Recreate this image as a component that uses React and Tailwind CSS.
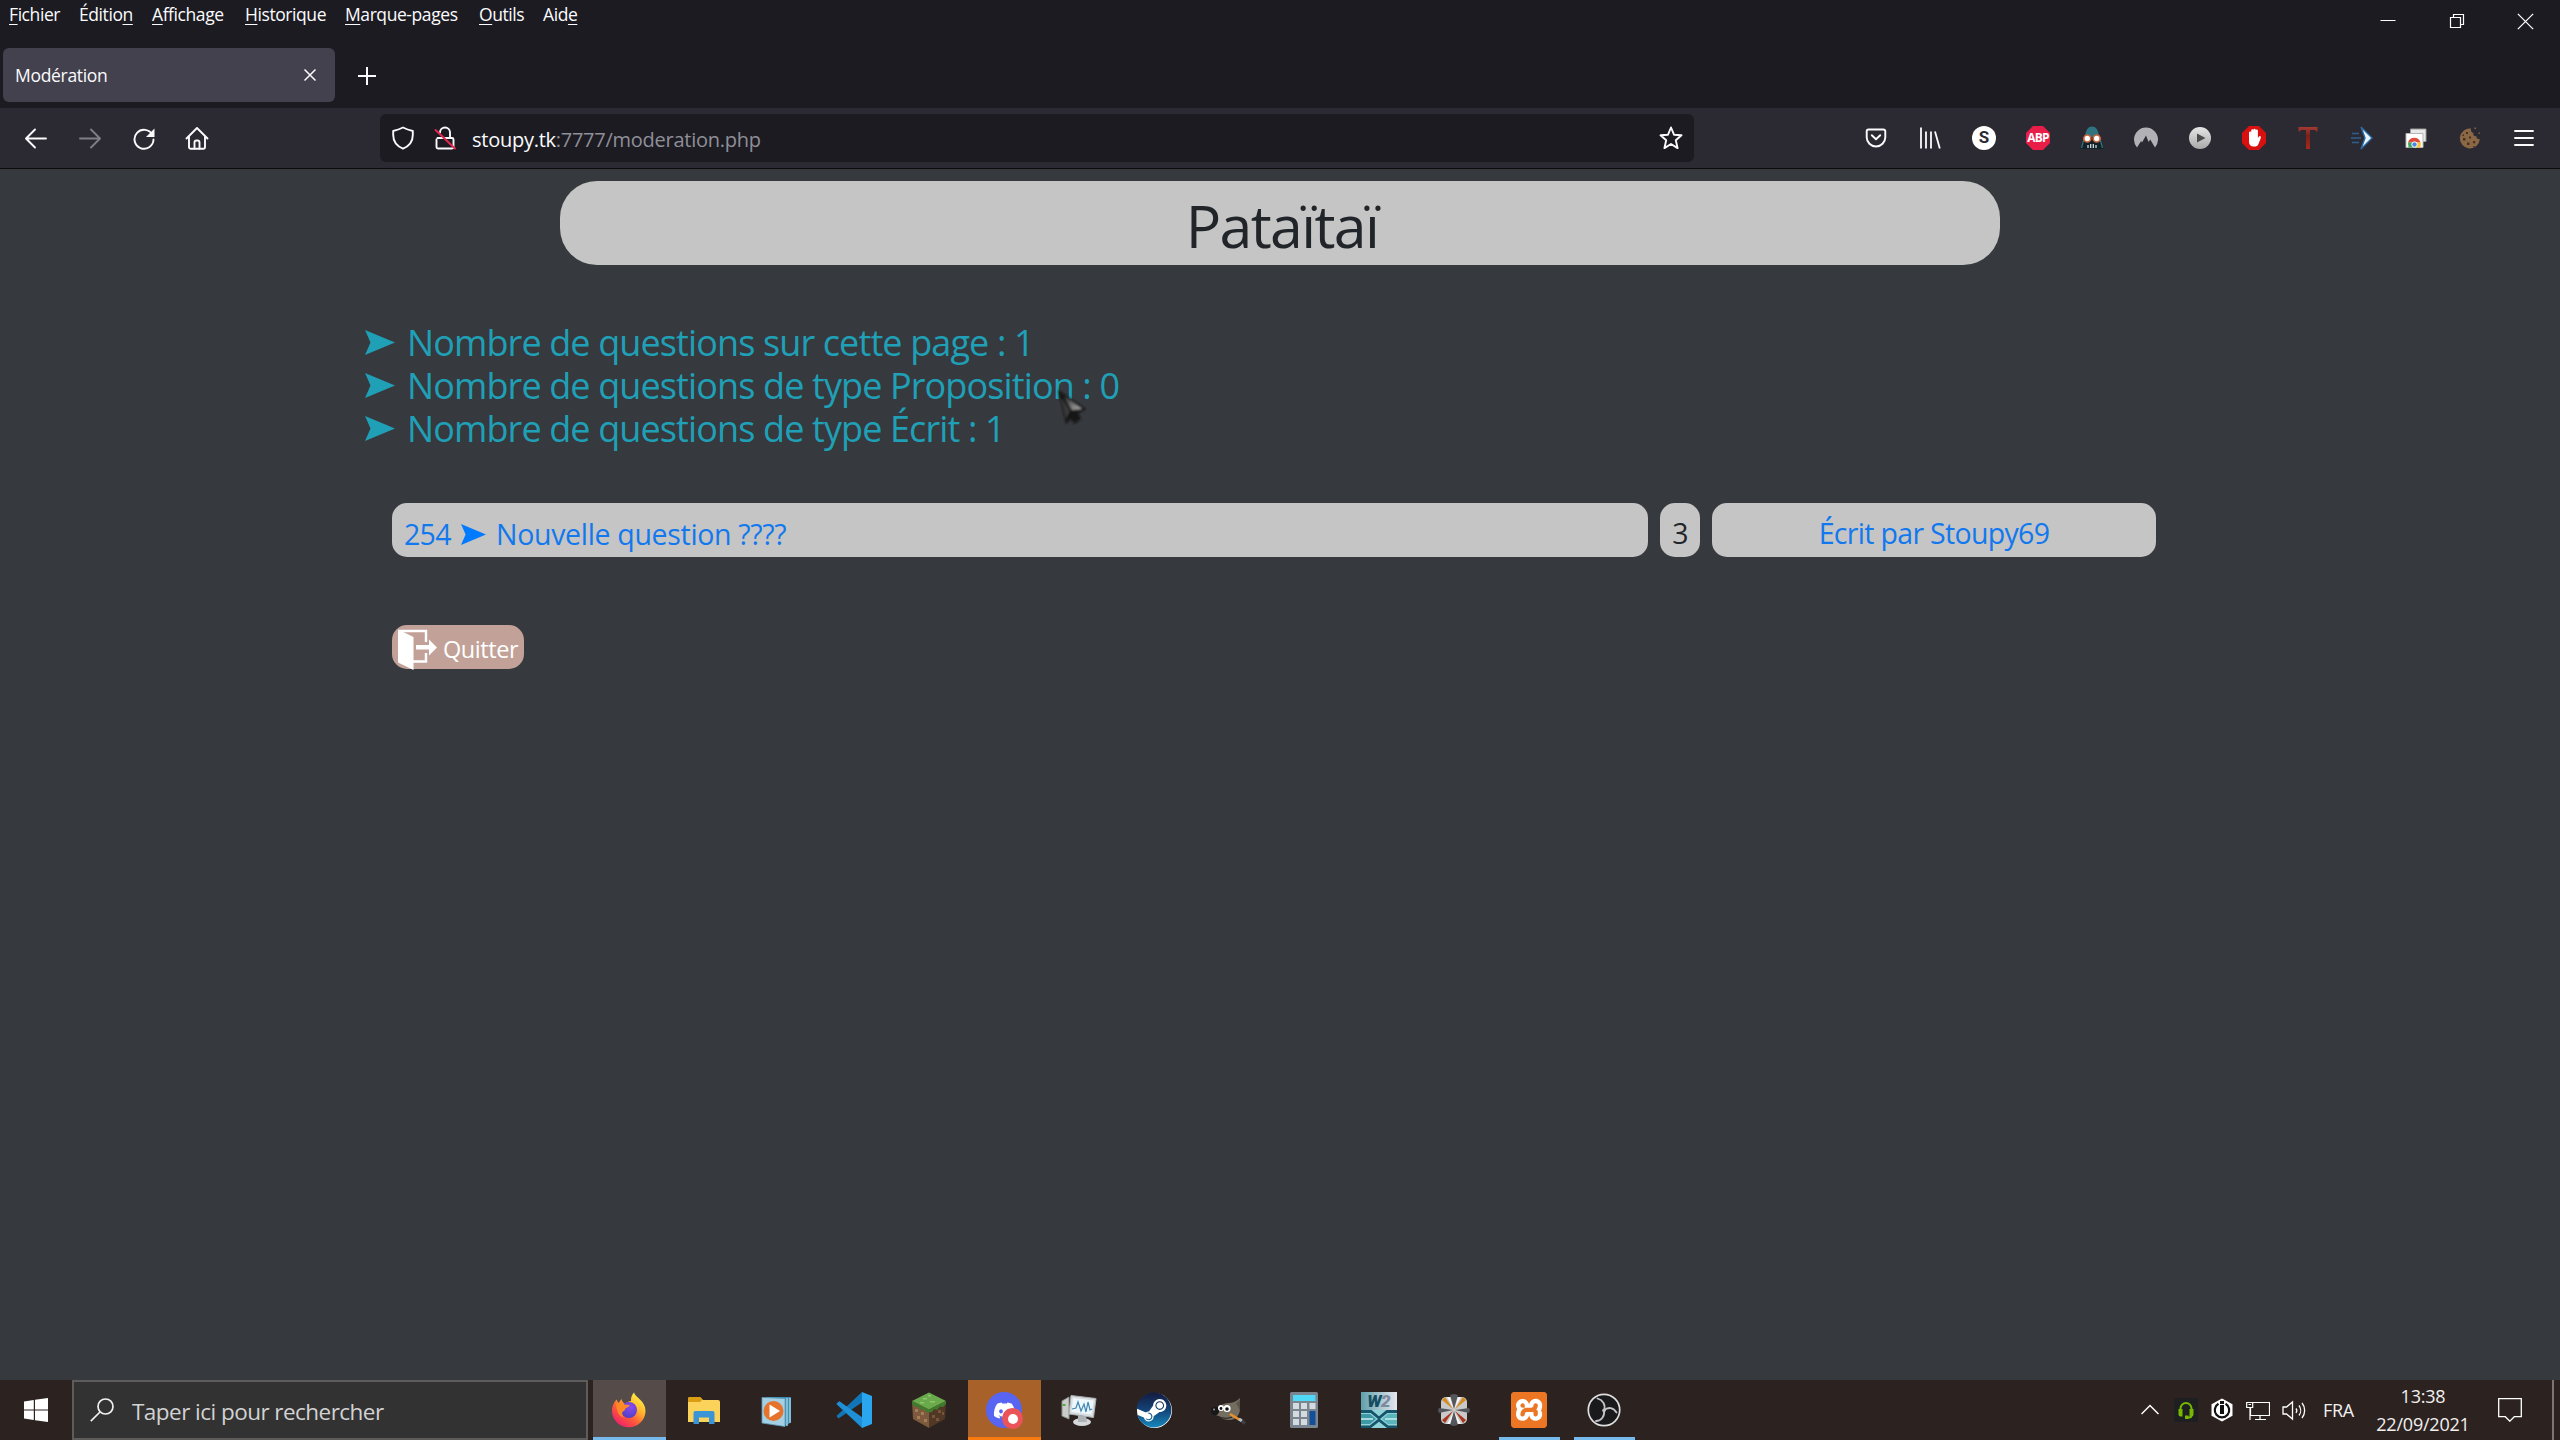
import React from "react";
import { FaSteam, FaDiscord } from "react-icons/fa";
import { SiXampp } from "react-icons/si";

const menu = [
  { pre: "", key: "F", post: "ichier", w: "w-[70px]" },
  { pre: "Éditio", key: "n", post: "", w: "w-[73px]" },
  { pre: "", key: "A", post: "ffichage", w: "w-[93px]" },
  { pre: "", key: "H", post: "istorique", w: "w-[100px]" },
  { pre: "", key: "M", post: "arque-pages", w: "w-[134px]" },
  { pre: "", key: "O", post: "utils", w: "w-[64px]" },
  { pre: "Aid", key: "e", post: "", w: "w-[60px]" },
];

function Svg({ size = 24, className = "", children, box = 24 }) {
  return (
    <svg
      width={size}
      height={size}
      viewBox={`0 0 ${box} ${box}`}
      fill="none"
      className={`shrink-0 ${className}`}
    >
      {children}
    </svg>
  );
}

const line = {
  stroke: "#fbfbfe",
  strokeWidth: 1.9,
  strokeLinecap: "round",
  strokeLinejoin: "round",
};

function WindowControls() {
  return (
    <div className="ml-auto flex h-[42px] items-center">
      <div className="flex w-[68px] justify-center">
        <Svg size={16} box={16}>
          <path d="M0.5 7.500h15" stroke="#fff" strokeWidth="1" />
        </Svg>
      </div>
      <div className="flex w-[69px] justify-center">
        <Svg size={16} box={16}>
          <path d="M1.5 4.5h10v10h-10z M4.5 4.5v-3h10v10h-3" stroke="#fff" strokeWidth="1.2" />
        </Svg>
      </div>
      <div className="flex w-[69px] justify-center">
        <Svg size={17} box={16}>
          <path d="M0.8 0.8l14.4 14.4M15.2 0.8L0.8 15.2" stroke="#fff" strokeWidth="1.2" />
        </Svg>
      </div>
    </div>
  );
}

function TitleBar() {
  return (
    <div className="flex h-[48px] items-start">
      <div className="flex pl-[9px] pt-[2px] text-[17.5px] leading-6 tracking-[-0.024em] text-[#fbfbfe]">
        {menu.map((m) => (
          <div key={m.pre + m.key} className={`shrink-0 whitespace-nowrap ${m.w}`}>
            {m.pre}
            <span className="underline decoration-1 underline-offset-[3px]">{m.key}</span>
            {m.post}
          </div>
        ))}
      </div>
      <WindowControls />
    </div>
  );
}

function Tabs() {
  return (
    <div className="flex h-[60px] items-start pl-[3px]">
      <div className="flex h-[54px] w-[332px] items-center justify-between rounded-[6px] bg-[#42414d] pl-[12px] pr-[18px]">
        <span className="text-[17.5px] tracking-[-0.018em] text-[#fbfbfe]">Modération</span>
        <Svg size={14} box={14}>
          <path d="M1.5 1.5l11 11M12.5 1.5l-11 11" stroke="#fbfbfe" strokeWidth="1.5" />
        </Svg>
      </div>
      <div className="flex h-[56px] w-[64px] items-center justify-center">
        <Svg size={20} box={20}>
          <path d="M10 1v18M1 10h18" stroke="#fbfbfe" strokeWidth="2" />
        </Svg>
      </div>
    </div>
  );
}

const extensions = [
  <Svg key="pocket">
    <path {...line} d="M4.5 3.5h15a1.8 1.8 0 0 1 1.8 1.8v5.9a9.3 9.3 0 0 1-18.6 0V5.3a1.8 1.8 0 0 1 1.8-1.8z" />
    <path {...line} d="M7.8 9.2L12 13.3l4.2-4.1" />
  </Svg>,
  <Svg key="library">
    <path d="M3 1.5v21M8 5.5v17M13 5.5v17M17 5.5l4.8 17" stroke="#fbfbfe" strokeWidth="1.8" />
  </Svg>,
  <div key="s" className="flex size-6 items-center justify-center rounded-full bg-white font-[Roboto] text-[17px] font-bold text-[#2b2a33]">
    S
  </div>,
  <div
    key="abp"
    className="flex size-6 items-center justify-center bg-[#e81e48] font-['Open_Sans'] text-[12px] font-bold tracking-[-0.07em] text-white [clip-path:polygon(29%_0,71%_0,100%_29%,100%_71%,71%_100%,29%_100%,0_71%,0_29%)]"
  >
    ABP
  </div>,
  <Svg key="vader">
    <path d="M12 1c4 0 6 2.600 6.800 7L22 20l2 3H0l2-3L5.200 8C6 3.600 8 1 12 1z" fill="#12222b" />
    <path d="M12 0.500c4.500 0 6.200 4 7.300 10.500H4.700C5.800 4.500 7.500 0.500 12 0.500z" fill="#2f7380" />
    <path d="M4 13L1.500 22M20 13l2.500 9" stroke="#2f7380" strokeWidth="1.200" />
    <circle cx="7.300" cy="12.500" r="3.500" fill="#fff" stroke="#c8633c" strokeWidth="1.700" />
    <circle cx="16.700" cy="12.500" r="3.500" fill="#fff" stroke="#c8633c" strokeWidth="1.700" />
    <path d="M8 19v3M10.700 18v4M13.300 18v4M16 19v3" stroke="#dfe8ea" strokeWidth="1.200" />
  </Svg>,
  <Svg key="nord">
    <path
      d="M3 21.500A12 12 0 1 1 21 21.500L16.200 13.500l-1.600 2.600-2.600-6.600-4 7-.9-1.500z"
      fill="#b2b2b6"
    />
  </Svg>,
  <Svg key="play">
    <defs>
      <linearGradient id="pl" x1="0" y1="0" x2="0" y2="1">
        <stop offset="0" stopColor="#e6e6e6" />
        <stop offset="1" stopColor="#a9a9a9" />
      </linearGradient>
    </defs>
    <circle cx="12" cy="12" r="11" fill="url(#pl)" />
    <path d="M9 7.500l8.500 4.500L9 16.500z" fill="#4b4b4b" />
  </Svg>,
  <Svg key="adblock">
    <path d="M7 0h10l7 7v10l-7 7H7l-7-7V7z" fill="#d8100f" />
    <path
      d="M7 12V6.500a1.100 1.100 0 0 1 2.200 0V4.300a1.100 1.100 0 0 1 2.200 0V3.600a1.200 1.200 0 0 1 2.300 0v1a1.100 1.100 0 0 1 2.200 0V12l1-1.500a1.200 1.200 0 0 1 2 1.200l-2.600 6.800c-.6 1.400-2 2-4 2-3.800 0-5.300-2-5.300-5z"
      fill="#fff"
    />
  </Svg>,
  <Svg key="t">
    <defs>
      <linearGradient id="tg" x1="0" y1="0" x2="0" y2="1">
        <stop offset="0" stopColor="#a33a33" />
        <stop offset="0.400" stopColor="#7d2018" />
        <stop offset="1" stopColor="#a62a1a" />
      </linearGradient>
    </defs>
    <path d="M2.500 1h19v4.500h-1.500l-1-1.500h-5V23h-4V4H5L4 5.500H2.500z" fill="url(#tg)" />
  </Svg>,
  <Svg key="arrow">
    <path d="M11 1l11 11-11 11 4-11z" fill="#e9f4fd" stroke="#2a6aa5" strokeWidth="1.400" />
    <path d="M2 7.500h7M1 12h10M2 16.500h7" stroke="#2c5f90" strokeWidth="1.300" />
  </Svg>,
  <Svg key="chrome">
    <path d="M6.500 3H22v12.500H6.500z" fill="#e8e8e8" stroke="#9a9a9a" />
    <path d="M2 7.500h17v14H2z" fill="#fff" stroke="#b5b5b5" />
    <path d="M4 16.500a6.500 6.500 0 0 1 12.500 0z" fill="#de4a3c" />
    <path d="M4 16.500h5l1.500 5H4.500z" fill="#3fa55a" />
    <path d="M12 16.500h5l-.5 5h-5z" fill="#f7c531" />
    <circle cx="10.500" cy="18.500" r="2.700" fill="#4a86ea" stroke="#fff" />
  </Svg>,
  <Svg key="cookie">
    <path d="M13 2.500A10 10 0 1 0 21.800 13c-2.500.5-3.500-1-3.300-2.800-2.300.5-3.800-1-3-3.200-2-.3-3-2-2.500-4.500z" fill="#8a6846" />
    <path
      d="M8 6h2v2H8zM5 12h2.400v2.400H5zM11 10.500h2v2h-2zM9 16.500h2.400v2.400H9zM15 15h2.200v2.200H15zM4.500 8.500h1.500V10H4.500zM15 20h1.500v1H15z"
      fill="#4a2f1d"
    />
    <path d="M16.500 1.500h1.500v1.500h-1.500zM20.500 6.500h1.500v1.200h-1.500z" fill="#8a6846" />
  </Svg>,
  <Svg key="menu">
    <path d="M3 5h18M3 12h18M3 19h18" stroke="#fbfbfe" strokeWidth="1.900" strokeLinecap="round" />
  </Svg>,
];

function Toolbar() {
  return (
    <div className="flex h-[61px] items-center border-b border-[#0c0c0d] bg-[#2b2a33]">
      <div className="flex w-[380px] pl-[9px]">
        <div className="flex w-[54px] justify-center">
          <Svg>
            <path {...line} d="M22 12.500H2.500M11 3.500L2 12.500l9 9" />
          </Svg>
        </div>
        <div className="flex w-[54px] justify-center">
          <Svg className="opacity-40">
            <path {...line} d="M2 12.500h19.500M13 3.500l9 9-9 9" />
          </Svg>
        </div>
        <div className="flex w-[54px] justify-center">
          <Svg>
            <path {...line} d="M20.500 9A9.500 9.500 0 1 0 21.500 13.500" />
            <path d="M22.500 2.500v8.500h-8.500z" fill="#fbfbfe" />
          </Svg>
        </div>
        <div className="flex w-[52px] justify-center">
          <Svg>
            <path {...line} d="M1.500 12.500L12 2 22.500 12.500M4 10.500v10.500a1.800 1.800 0 0 0 1.800 1.800h12.400a1.800 1.800 0 0 0 1.800-1.800V10.500" />
            <path {...line} d="M9.500 22.500v-6a2 2 0 0 1 2-2h1a2 2 0 0 1 2 2v6" />
          </Svg>
        </div>
      </div>
      <div className="flex h-[48px] w-[1314px] items-center rounded-[6px] bg-[#1c1b22] pl-[11px] pr-[11px]">
        <Svg>
          <path {...line} d="M12 1.500c3 1.500 6 2.600 9.800 3.500v4c0 6-3.500 11-9.800 13.700C5.700 20 2.200 15 2.200 9V5C6 4.100 9 3 12 1.500z" />
        </Svg>
        <Svg className="ml-[18px]">
          <path {...line} d="M4.500 12h14.500a1.500 1.500 0 0 1 1.500 1.500v7.500a1.500 1.500 0 0 1-1.500 1.500H5a1.500 1.500 0 0 1-1.500-1.500v-7.500M7 6.500a5 5 0 0 1 10 0V12" />
          <path d="M2.500 4l19.500 18.500" stroke="#e22850" strokeWidth="2" strokeLinecap="round" />
        </Svg>
        <span className="ml-[15px] whitespace-nowrap pt-[3px] text-[20px] leading-[30px] tracking-[-0.013em] text-[#8f8f98]">
          <span className="text-[#fbfbfe]">stoupy.tk</span>:7777/moderation.php
        </span>
        <Svg className="ml-auto">
          <path {...line} d="M12 1.500l3 7.200 7.500.6-5.700 5 1.800 7.800L12 18l-6.600 4.100 1.800-7.800-5.700-5 7.500-.6z" />
        </Svg>
      </div>
      <div className="ml-auto flex pr-[9px]">
        {extensions.map((e, i) => (
          <div key={i} className="flex w-[54px] justify-center">
            {e}
          </div>
        ))}
      </div>
    </div>
  );
}

function Arrow({ w, h, fill, className }) {
  return (
    <svg width={w} height={h} viewBox="0 0 30 25" preserveAspectRatio="none" className={`shrink-0 ${className}`}>
      <path d="M0 0L30 12.500 0 25l5.500-12.500z" fill={fill} />
    </svg>
  );
}

const stats = [
  "Nombre de questions sur cette page : 1",
  "Nombre de questions de type Proposition : 0",
  "Nombre de questions de type Écrit : 1",
];

function Pointer() {
  return (
    <svg width="32" height="36" viewBox="0 0 32 36" className="absolute left-[1057px] top-[220px]">
      <defs>
        <linearGradient id="cur" x1="0" y1="0" x2="1" y2="1">
          <stop offset="0" stopColor="#111" />
          <stop offset="1" stopColor="#b5b5b5" />
        </linearGradient>
        <filter id="soft" x="-20%" y="-20%" width="140%" height="140%">
          <feGaussianBlur stdDeviation="0.800" />
        </filter>
      </defs>
      <g filter="url(#soft)">
        <path d="M1 1l28 19-8 4 3 6-7 5-3-5-5 5z" fill="#151515" />
        <path d="M5 5l20 15-10 1z" fill="url(#cur)" />
        <path d="M4 8l9 14-4 8z" fill="#3a3a3a" />
      </g>
    </svg>
  );
}

function Page() {
  return (
    <div className="relative h-[1211px] bg-[#36393e] pt-[12px]">
      <div className="mx-auto h-[84px] w-[1440px] rounded-[37px] bg-[#c5c5c5] pl-[4px] pt-[6px] text-center text-[59px] leading-[76px] tracking-[-0.028em] text-[#212529]">
        Pataïtaï
      </div>
      <div className="mt-[56px] flex flex-col pl-[365px] text-[36px] leading-[43px] tracking-[-0.0245em] text-[#1fa0b6]">
        {stats.map((s) => (
          <div key={s} className="flex h-[43px] items-center whitespace-nowrap">
            <Arrow w={30} h={25} fill="#1fa0b6" className="mr-[12px]" />
            <span>{s}</span>
          </div>
        ))}
      </div>
      <div className="mt-[53px] flex gap-[12px] pl-[392px] text-[28.500px] leading-[45px] tracking-[-0.024em]">
        <div className="flex h-[54px] w-[1256px] items-center whitespace-nowrap rounded-[15px] bg-[#c5c5c5] pl-[12px] pt-[8px] text-[#1278ee]">
          <span className="w-[57px]">254</span>
          <Arrow w={25} h={21} fill="#007bff" className="mr-[10px]" />
          <span className="tracking-[-0.011em]">Nouvelle question ????</span>
        </div>
        <div className="h-[54px] w-[40px] rounded-[15px] bg-[#c5c5c5] pt-[8px] text-center text-[#212529]">3</div>
        <div className="h-[54px] w-[444px] rounded-[15px] bg-[#c5c5c5] pt-[8px] text-center text-[#1278ee]">
          Écrit par Stoupy69
        </div>
      </div>
      <div className="ml-[392px] mt-[68px] flex h-[44px] w-[132px] items-center rounded-[15px] bg-[#c2a298] pl-[6px]">
        <svg width="39" height="41" viewBox="0 0 39 41" className="mt-[5px] shrink-0">
          <path d="M0 0.500L15.500 8v33L0 33.500z" fill="#fff" />
          <path d="M1 2h27v11M28 24v8.500H15" fill="none" stroke="#fff" strokeWidth="2.400" />
          <path d="M18 16h13v-5.500l8 8-8 8V20.500H18z" fill="#fff" />
        </svg>
        <span className="ml-[6px] pt-[3px] text-[23.500px] leading-[36px] tracking-[-0.018em] text-white">Quitter</span>
      </div>
      <Pointer />
    </div>
  );
}

function Firefox() {
  return (
    <Svg size={36} box={36}>
      <defs>
        <linearGradient id="ff1" x1="0.850" y1="0.100" x2="0.200" y2="0.950">
          <stop offset="0" stopColor="#fff14a" />
          <stop offset="0.350" stopColor="#ffb02a" />
          <stop offset="0.650" stopColor="#ff5a3a" />
          <stop offset="1" stopColor="#f01f6a" />
        </linearGradient>
        <radialGradient id="ff2" cx="0.600" cy="0.300" r="0.800">
          <stop offset="0" stopColor="#8a4bf0" />
          <stop offset="1" stopColor="#4a3fc0" />
        </radialGradient>
      </defs>
      <path
        d="M23 0.500c1 5 11.500 8 11.500 18.500a16.600 16 0 0 1-33.500 0c0-6 2.500-9 4.500-11.500L7.500 11l3-4c.5 2 1.500 3.500 3 4.500L20 9c-.5-3 1-6.500 3-8.500z"
        fill="url(#ff1)"
      />
      <circle cx="18" cy="18" r="8" fill="url(#ff2)" />
      <path d="M5 12c4-2 7-.5 8.500.5l5 .5c0 2-3 2.500-4 3.500-.8 1-.5 2-2.500 3-1.500 1-1 4 1 6C8 25 6 20 5 12z" fill="#ff8a25" />
      <path d="M17 9.500c4-1 9 2 9.500 8 2-6-2-10-9.500-8z" fill="#ffd02f" />
    </Svg>
  );
}

const taskbarIcons = [
  { icon: <Firefox />, tile: "bg-[#554b49]", bar: "w-full bg-[#76b9ed]" },
  {
    icon: (
      <Svg size={36} box={36}>
        <path d="M2 7a2 2 0 0 1 2-2h10l3 3h15a2 2 0 0 1 2 2v20H2z" fill="#fbd35b" />
        <path d="M2 7a2 2 0 0 1 2-2h10l2.500 2.500L14 10H2z" fill="#d99e14" />
        <path d="M7.500 32V21a2 2 0 0 1 2-2h17a2 2 0 0 1 2 2v11h-5.500v-6.500h-10V32z" fill="#3a94d5" />
      </Svg>
    ),
  },
  {
    icon: (
      <Svg size={36} box={36} className="mr-[2px]">
        <path d="M6 5h25v25l-5 4z" fill="#3f8fb5" />
        <path d="M27 6v28M30 6v25" stroke="#a9d6e9" strokeWidth="1.300" />
        <path d="M2 5.500l23 1V34.500L2 31z" fill="#a5cfe2" stroke="#5c9dbb" strokeWidth="0.800" />
        <circle cx="13.500" cy="19" r="10" fill="#e5732b" />
        <path d="M9.500 12.500l10.500 6.500-10.500 6.500z" fill="#fff" />
      </Svg>
    ),
  },
  {
    icon: (
      <Svg size={36} box={36}>
        <path d="M2.500 9.500L0.500 12l25.500 24 2-9z" fill="#1580c8" />
        <path d="M2.500 26.500L0.500 24 26 0l2 9z" fill="#1176b8" />
        <path d="M0.500 12l3-2.800L27 26v10z" fill="#1f8fd6" />
        <path d="M26 0l10 4v28l-10 4z" fill="#2aa5f0" />
      </Svg>
    ),
  },
  {
    icon: (
      <Svg size={36} box={36}>
        <path d="M1 9l17 8v19L2 27z" fill="#7d5a3d" />
        <path d="M35 9l-17 8v19l16-9z" fill="#513826" />
        <path d="M18 0.500L35 9l-17 8.500L1 9z" fill="#6aa94c" />
        <path d="M1 9l17 8.500v3l-3-.5-2-3-3 1-3-3.500-3 .5-3-3zM35 9l-17 8.500v3l3-.5 2-3 3 1 3-3.500 3 .5 3-3z" fill="#3f7a2d" />
        <path d="M4 17h3v3H4zM10 20h3v3h-3zM6 24h3v3H6zM13 27h3v3h-3z" fill="#a47c57" />
        <path d="M21 23h3v3h-3zM27 18h3v3h-3zM25 26h3v3h-3zM31 20h2v3h-2z" fill="#785439" />
        <path d="M12 6h4v1.500h-4zM19 9h5v1.500h-5zM9 10h4v1.500H9zM17 3h3v1.500h-3z" fill="#8cc76c" />
      </Svg>
    ),
  },
  {
    icon: (
      <div className="relative flex size-9 items-center justify-center rounded-full bg-[#5865f2]">
        <FaDiscord size={23} color="#fff" />
        <div className="absolute left-[16px] top-[16px] flex size-[21px] items-center justify-center rounded-full bg-[#ea5459]">
          <div className="size-[10px] rounded-full bg-white" />
        </div>
      </div>
    ),
    tile: "bg-[#a86129]",
    bar: "w-full bg-[#f97b10]",
  },
  {
    icon: (
      <Svg size={36} box={36}>
        <path d="M1 9l7-4v22l-7-3z" fill="#c9ccc9" stroke="#8a8f8a" />
        <path d="M1.500 13h3" stroke="#59a83c" strokeWidth="2" />
        <ellipse cx="21" cy="30" rx="9" ry="4" fill="#d5d9da" />
        <path d="M17 24h8l1 6h-9z" fill="#aeb3b5" />
        <path d="M10 3.500l25 3-2.500 19L8 22z" fill="#d8dcde" stroke="#a9aeb0" />
        <path d="M12 6l20.500 2.500-2 14L10.500 20z" fill="#eef7fc" />
        <path d="M11 17l4-1 2-6 3 9 3-7 2 8 2-10 2 8 2-1" stroke="#3f86b5" strokeWidth="1.200" />
      </Svg>
    ),
  },
  {
    icon: (
      <div className="flex size-[35px] items-center justify-center rounded-full bg-white">
        <svg width="0" height="0" className="absolute">
          <defs>
            <linearGradient id="st" x1="0" y1="0" x2="0" y2="1">
              <stop offset="0" stopColor="#141b3f" />
              <stop offset="0.500" stopColor="#134377" />
              <stop offset="1" stopColor="#1688bd" />
            </linearGradient>
          </defs>
        </svg>
        <FaSteam size={36} className="shrink-0 fill-[url(#st)]" />
      </div>
    ),
  },
  {
    icon: (
      <Svg size={36} box={36} className="mr-[3px]">
        <path d="M30 6c-3 3-7 5-12 5-5 0-9 4-11 6l-1 6c4 3 9 5 14 5 6 0 10-6 10-11z" fill="#746e60" />
        <path d="M30 6c-1 3-2 4-4 5l4 8z" fill="#5b5549" />
        <circle cx="5" cy="19" r="4.200" fill="#17171a" />
        <circle cx="4" cy="17.500" r="1" fill="#999" />
        <circle cx="11" cy="16" r="3" fill="#fff" />
        <circle cx="17" cy="16.500" r="3.600" fill="#fff" />
        <circle cx="11" cy="16.500" r="1.400" fill="#111" />
        <circle cx="17" cy="17" r="1.800" fill="#111" />
        <path d="M7 24c4 2 10 3 15 1" stroke="#222" strokeWidth="1.200" />
        <path d="M20 22l10 6" stroke="#e8912a" strokeWidth="2.600" />
        <path d="M29 27l3 2" stroke="#b9bcc0" strokeWidth="3.200" />
        <path d="M32 29l3 2.500" stroke="#3d4147" strokeWidth="3.200" />
      </Svg>
    ),
  },
  {
    icon: (
      <Svg size={36} box={36}>
        <rect x="4" width="28" height="36" rx="1.500" fill="#7b8590" />
        <rect x="7" y="3" width="22.500" height="6" fill="#4fd8f7" />
        <path d="M7 11h6v6H7zM15 11h6v6h-6zM23.500 11h6v6h-6zM7 19h6v6H7zM15 19h6v6h-6zM7 27h6v6H7zM15 27h6v6h-6z" fill="#d3dae0" />
        <path d="M23.500 19h6v14h-6z" fill="#134e98" />
      </Svg>
    ),
  },
  {
    icon: (
      <div className="flex size-9 flex-col bg-gradient-to-r from-[#5fa0ac] to-[#e6e8ee] font-[Roboto]">
        <div className="flex h-[18px] w-9 items-center justify-center whitespace-nowrap text-[17px] font-black italic leading-[18px] tracking-[-0.04em] text-[#164d60]">
          W<span className="pr-px text-[#7f89a0]">2</span>
        </div>
        <svg width="36" height="18" viewBox="0 0 36 18" className="shrink-0">
          <path d="M0 0h36v18H0z" fill="#8fd3d8" />
          <path d="M0 1.500h10L18 8l8-6.500h10M0 17h9l9-7 9 7h9" fill="none" stroke="#15546a" strokeWidth="2.800" />
          <path d="M0 4h9l6 5-6 5H0z" fill="#3f98a5" />
          <path d="M36 4h-9l-6 5 6 5h9z" fill="#5cb4bd" />
          <path d="M0 9h12M24 9h12" stroke="#c5eef0" strokeWidth="1.500" />
        </svg>
      </div>
    ),
  },
  {
    icon: (
      <Svg size={36} box={36}>
        <rect x="5" y="5" width="26" height="27" rx="5" fill="#c9c9c9" />
        <path d="M14 3l4-1 4 1-4 14zM14 33l4 1 4-1-4-14zM3 16l-1 2 1 3 14-3zM33 16l1 2-1 3-14-3z" fill="#54575c" />
        <path d="M6 8l3-3 8 12zM30 8l-3-3-8 12z" fill="#d58b1f" />
        <path d="M6 28l3 3 8-12zM30 28l-3 3-8-12z" fill="#a8351c" />
        <path d="M11 5h3l3.500 12zM25 5h-3l-3.500 12zM11 32h3l3.500-12zM25 32h-3l-3.500-12z" fill="#f5f5f5" />
      </Svg>
    ),
  },
  {
    icon: (
      <div className="flex size-9 items-center justify-center rounded-[4px] bg-gradient-to-b from-[#ee8a45] to-[#ea6f1c]">
        <div className="flex size-[30px] items-center justify-center bg-white">
          <SiXampp size={36} color="#ec7623" className="shrink-0" />
        </div>
      </div>
    ),
    bar: "w-[61px] bg-[#76b9ed]",
  },
  {
    icon: (
      <Svg size={36} box={36}>
        <circle cx="18" cy="18" r="15.700" fill="#1a191c" stroke="#dedede" strokeWidth="1.700" />
        <g fill="none" stroke="#c4c4c8" strokeWidth="1.800" strokeLinecap="round">
          <path d="M18 18.500C20 13 17 8 11.500 6.500" />
          <path d="M18 18.500c4-4 9.500-3 12.500 2" />
          <path d="M18 18.500c1 6-3 10.500-8 10.500" />
        </g>
        <circle cx="18" cy="18.500" r="1.800" fill="#c4c4c8" />
      </Svg>
    ),
    bar: "w-[61px] bg-[#76b9ed]",
  },
];

function Tray() {
  return (
    <div className="ml-auto flex h-[60px] items-center text-[18px] tracking-[-0.02em] text-[#f2f0ef]">
      <div className="flex w-[48px] items-center pl-[15px]">
        <Svg size={18} box={18}>
          <path d="M0.500 13L9 4.500 17.500 13" stroke="#fff" strokeWidth="1.500" />
        </Svg>
      </div>
      <div className="flex size-6 items-center justify-center bg-[#1e1f21]">
        <Svg size={20} box={20}>
          <path d="M4.500 12V8.500a5.500 5.500 0 0 1 11 0V15c0 1.500-1 2.500-2.500 2.500h-2.500" stroke="#76b900" strokeWidth="2" />
          <path d="M2.500 9h4v7.500H4.500a2 2 0 0 1-2-2zM13.500 9h4v5.500a2 2 0 0 1-2 2h-2zM9 15.500h3.500v3.500H9z" fill="#76b900" />
        </Svg>
      </div>
      <Svg className="ml-[12px]">
        <path d="M12 0.500l10.500 5.800v11.400L12 23.500 1.500 17.700V6.300z" fill="#fff" />
        <path d="M8.500 5.800a7.200 7.200 0 1 0 7 0" stroke="#111" strokeWidth="2.200" />
        <path d="M10 7h4v9h-4zM10 3h4v3h-4z" fill="#111" />
      </Svg>
      <Svg className="ml-[12px]">
        <path d="M6.500 4.500h17v13H4.500v-8M14 17.500v4M9 21.500h11M4 9v13" stroke="#fff" strokeWidth="1.200" />
        <path d="M0.700 4.500h6v5h-6zM2.500 6.500h2.500" stroke="#fff" strokeWidth="1.200" />
      </Svg>
      <Svg className="ml-[12px]">
        <path d="M1 9v7h3.500l6 5V4l-6 5z" stroke="#fff" strokeWidth="1.300" />
        <path d="M14 10.500c1 1.200 1 3 0 4.500M17 7.500c2.200 2.800 2.200 7 0 10M20 5c3.500 4 3.500 11 0 15" stroke="#fff" strokeWidth="1.300" />
      </Svg>
      <span className="ml-[17px] w-[37px]">FRA</span>
      <div className="flex w-[126px] flex-col items-center whitespace-nowrap leading-[28px] tracking-[-0.012em]">
        <span>13:38</span>
        <span>22/09/2021</span>
      </div>
      <Svg className="ml-[12px]">
        <path d="M0.700 0.700h22.600v18h-7l-4.500 4.500-4.500-4.500H0.700z" stroke="#fff" strokeWidth="1.300" />
      </Svg>
      <div className="ml-[30px] mr-[6px] h-[60px] w-[2px] bg-[#7c7573]" />
    </div>
  );
}

function Taskbar() {
  return (
    <div className="flex h-[60px] bg-[#2c2321]">
      <div className="flex w-[72px] items-center justify-center">
        <Svg>
          <path d="M0 3.400l9.800-1.400v9.400H0zM11 1.800L24 0v11.400H11zM0 12.600h9.800V22L0 20.600zM11 12.600h13V24l-13-1.800z" fill="#fff" />
        </Svg>
      </div>
      <div className="flex h-[60px] w-[516px] items-center border-2 border-[#5d5c5b] bg-[#323232] pl-[16px]">
        <Svg>
          <circle cx="15.500" cy="8.500" r="7.500" stroke="#f0f0f0" strokeWidth="1.700" />
          <path d="M10 14L0.800 23.200" stroke="#f0f0f0" strokeWidth="1.700" />
        </Svg>
        <span className="ml-[18px] pt-[3px] text-[22.500px] tracking-[-0.024em] text-[#d2d2d2]">Taper ici pour rechercher</span>
      </div>
      <div className="ml-[5px] flex gap-[2px]">
        {taskbarIcons.map((t, i) => (
          <div key={i} className={`flex h-[60px] w-[73px] flex-col items-center ${t.tile || ""}`}>
            <div className="mr-px flex h-[57px] items-center justify-center pt-[3px]">{t.icon}</div>
            <div className={`h-[3px] ${t.bar || ""}`} />
          </div>
        ))}
      </div>
      <Tray />
    </div>
  );
}

export default function App() {
  return (
    <div className="flex h-[1440px] w-[2560px] flex-col overflow-hidden bg-[#1c1b22] font-['Open_Sans','Noto_Sans',sans-serif]">
      <TitleBar />
      <Tabs />
      <Toolbar />
      <Page />
      <Taskbar />
    </div>
  );
}
